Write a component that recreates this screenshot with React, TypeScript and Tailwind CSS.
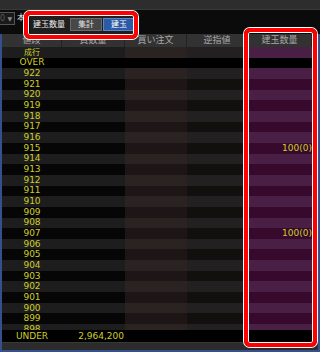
import React from "react";

type Tone = "light" | "dark" | "black";

const rows: string[] = ["成行", "OVER"];
for (let p = 922; p >= 898; p--) rows.push(String(p));

const holdings: Record<string, string> = {
  "915": "100(0)",
  "907": "100(0)",
};

const toneBg: Record<Tone, string[]> = {
  light: ["bg-[#1d1d1d]", "bg-[#1d1d1d]", "bg-[#2b2222]", "bg-[#222020]", "bg-[#4a1f45]"],
  dark: ["bg-[#060606]", "bg-[#060606]", "bg-[#1e1616]", "bg-[#120f0f]", "bg-[#37092d]"],
  black: ["bg-black", "bg-black", "bg-black", "bg-black", "bg-black"],
};

function getTone(label: string, i: number): Tone {
  if (label === "OVER") return "black";
  return i % 2 === 0 ? "light" : "dark";
}

const headers = [
  { label: "値段", w: "w-[60px]" },
  { label: "買数量", w: "w-[63px]" },
  { label: "買い注文", w: "w-[62px]" },
  { label: "逆指値", w: "w-[61px]" },
  { label: "建玉数量", w: "w-[64px]" },
];

export default function App() {
  return (
    <main className="relative w-[320px] h-[352px] overflow-hidden bg-black flex flex-col font-['DejaVu_Sans','Noto_Sans_CJK_JP',sans-serif]">
      {/* title strip */}
      <div className="h-[10px] shrink-0 bg-[#2d2d2d] border-b border-[#3a3a3a]" />

      {/* toolbar */}
      <div className="h-[24px] shrink-0 bg-[#0b0b0b] flex items-start">
        <div className="mt-[2px] w-[15px] h-[13px] border border-l-0 border-[#555] bg-[#1a1a1a] flex items-center justify-between pr-[2px]">
          <span className="text-[8px] leading-none text-[#5a5a5a]">0</span>
          <span className="text-[6px] leading-none text-[#8a8a8a]">▼</span>
        </div>
        <span className="ml-[2px] mt-[4px] text-[8px] leading-none text-[#dddddd]">本</span>
        <div className="ml-[5px] mt-[5px] w-[106px] h-[19px] bg-[#1e1e1e] flex items-center pl-[3px] pr-[1px]">
          <span className="text-[8px] leading-none text-[#eeeeee]">建玉数量</span>
          <div className="ml-auto flex gap-[1px]">
            <button className="w-[32px] h-[13px] border border-[#6a6a6a] bg-[#474747] text-[8px] leading-none text-[#e4e4e4]">
              集計
            </button>
            <button className="w-[32px] h-[13px] border border-[#5d86c8] bg-[#2c5aa6] text-[8px] leading-none text-white">
              建玉
            </button>
          </div>
        </div>
      </div>

      {/* board */}
      <div className="flex-1 flex flex-col border-x-2 border-b-2 border-[#34508e] min-h-0">
        <div className="h-[13px] shrink-0 flex bg-[#323232]">
          {headers.map((h) => (
            <div
              key={h.label}
              className={`${h.w} shrink-0 border-r border-[#222] flex items-center justify-center text-[9px] leading-none text-[#a8a8a8]`}
            >
              {h.label}
            </div>
          ))}
          <div className="flex-1" />
        </div>

        <div className="flex-1 overflow-hidden min-h-0">
          {rows.map((label, i) => {
            const tone = getTone(label, i);
            const bg = toneBg[tone];
            const isJa = label === "成行";
            return (
              <div key={label} className="h-[10.67px] flex text-[9px] leading-[11px] text-[#d0cd28]">
                <div className={`w-[60px] shrink-0 ${bg[0]} flex items-center justify-center`}>
                  <span className={isJa ? "text-[8px]" : ""}>{label}</span>
                </div>
                <div className={`w-[63px] shrink-0 ${bg[1]}`} />
                <div className={`w-[62px] shrink-0 ${bg[2]}`} />
                <div className={`w-[61px] shrink-0 ${bg[3]}`} />
                <div className={`w-[64px] shrink-0 ${bg[4]} flex items-center justify-end`}>
                  {holdings[label] ?? ""}
                </div>
                <div className={`flex-1 ${bg[4]}`} />
              </div>
            );
          })}
        </div>

        <div className="h-[12px] shrink-0 flex bg-black text-[9px] leading-none text-[#d0cd28]">
          <div className="w-[60px] flex items-center justify-center">UNDER</div>
          <div className="w-[63px] flex items-center justify-end pr-[1px]">2,964,200</div>
        </div>
        <div className="h-[8px] shrink-0 bg-[#2b2b2b] border-t border-[#383838]" />
      </div>

      {/* annotation highlights */}
      <div className="absolute left-[24px] top-[11px] w-[114px] h-[28px] rounded-[6px] border-4 border-[#ff0000] shadow-[0_0_0_1px_#ffffff,inset_0_0_0_1px_#ffffff] pointer-events-none" />
      <div className="absolute left-[244px] top-[28px] w-[73px] h-[319px] rounded-[6px] border-4 border-[#ff0000] shadow-[0_0_0_1px_#ffffff,inset_0_0_0_1px_#ffffff] pointer-events-none" />
    </main>
  );
}
